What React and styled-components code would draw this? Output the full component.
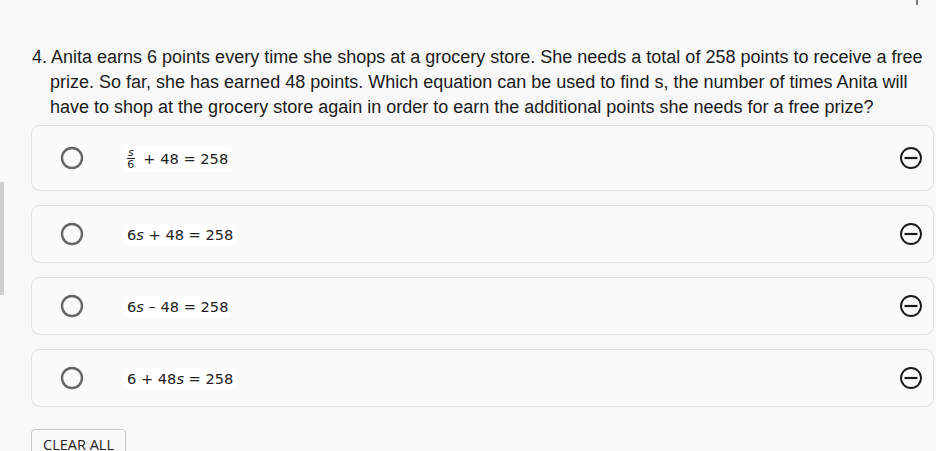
import React from "react";
import styled, { createGlobalStyle } from "styled-components";

const GlobalStyle = createGlobalStyle`
  html, body {
    margin: 0;
    padding: 0;
    background: #f8f8f8;
    overflow: hidden;
  }
`;

const choices = [
  { id: "a", tall: true, eq: "frac" },
  { id: "b", eq: ["6", "s", " + 48 = 258"] },
  { id: "c", eq: ["6", "s", " \u2013 48 = 258"] },
  { id: "d", eq: ["6 + 48", "s", " = 258"] },
];

function RadioIcon() {
  return (
    <svg width="24" height="24" viewBox="0 0 24 24">
      <circle cx="12" cy="12" r="10" fill="none" stroke="#666" strokeWidth="2.4" />
    </svg>
  );
}

function MinusIcon() {
  return (
    <svg width="24" height="24" viewBox="0 0 24 24">
      <circle cx="12" cy="12" r="10" fill="none" stroke="#1a1a1a" strokeWidth="1.9" />
      <line x1="5.5" y1="12" x2="18.5" y2="12" stroke="#1a1a1a" strokeWidth="2.2" />
    </svg>
  );
}

function Equation({ eq }) {
  if (eq === "frac") {
    return (
      <Eq>
        <Frac>
          <Num>s</Num>
          <Den>6</Den>
        </Frac>
        {" + 48 = 258"}
      </Eq>
    );
  }
  return (
    <Eq>
      {eq[0]}
      <Var>{eq[1]}</Var>
      {eq[2]}
    </Eq>
  );
}

export default function App() {
  return (
    <Page>
      <GlobalStyle />
      <Rail>
        <RailBar />
      </Rail>
      <Main>
        <Header>
          <Tick />
        </Header>
        <Question>
          <Line>4. Anita earns 6 points every time she shops at a grocery store. She needs a total of 258 points to receive a free</Line>
          <Line $indent>prize. So far, she has earned 48 points. Which equation can be used to find s, the number of times Anita will</Line>
          <Line $indent>have to shop at the grocery store again in order to earn the additional points she needs for a free prize?</Line>
        </Question>
        <List>
          {choices.map((c) => (
            <Card key={c.id} $tall={c.tall}>
              <RadioIcon />
              <Equation eq={c.eq} />
              <Strike>
                <MinusIcon />
              </Strike>
            </Card>
          ))}
        </List>
        <ClearButton>CLEAR ALL</ClearButton>
      </Main>
    </Page>
  );
}

const Page = styled.div`
  display: flex;
  width: 936px;
  height: 451px;
  background: #f8f8f8;
  overflow: hidden;
`;

const Rail = styled.div`
  width: 4px;
  flex: none;
`;

const RailBar = styled.div`
  margin-top: 182px;
  height: 113px;
  background: #cfcfcf;
`;

const Main = styled.div`
  flex: 1;
  padding: 0 2px 0 27px;
`;

const Header = styled.div`
  height: 45px;
  display: flex;
  justify-content: flex-end;
  padding-right: 16px;
`;

const Tick = styled.div`
  width: 2px;
  height: 5px;
  background: #777;
`;

const Question = styled.div`
  font-family: "Liberation Sans", Arial, sans-serif;
  font-size: 18px;
  line-height: 25px;
  color: #1b1b1b;
`;

const Line = styled.div`
  white-space: nowrap;
  padding-left: ${(p) => (p.$indent ? "19px" : "1px")};
`;

const List = styled.div`
  display: flex;
  flex-direction: column;
  gap: 14px;
  margin-top: 5px;
`;

const Card = styled.div`
  display: flex;
  align-items: center;
  height: ${(p) => (p.$tall ? "64px" : "56px")};
  border: 1px solid #e0e0e0;
  border-radius: 9px;
  background: #fafafa;
  padding: 0 10px 0 28px;
`;

const Eq = styled.span`
  display: inline-flex;
  align-items: center;
  margin-left: 40px;
  padding: 2px 3px;
  background: #ffffff;
  font-family: "DejaVu Sans", sans-serif;
  font-size: 14.6px;
  color: #222;
  white-space: pre;
`;

const Var = styled.span`
  font-style: italic;
`;

const Frac = styled.span`
  display: inline-flex;
  flex-direction: column;
  align-items: center;
  font-size: 11px;
  line-height: 11px;
  margin-right: 4px;
`;

const Num = styled.span`
  font-style: italic;
  border-bottom: 1px solid #222;
  padding: 0 1px;
`;

const Den = styled.span``;

const Strike = styled.div`
  margin-left: auto;
  display: flex;
`;

const ClearButton = styled.button`
  margin-top: 22px;
  height: 32px;
  padding: 5px 11px 0;
  border: 1px solid #c8c8c8;
  border-radius: 4px;
  background: #f8f8f8;
  font-family: "Open Sans", sans-serif;
  font-size: 14.5px;
  color: #222;
  display: flex;
  align-items: flex-start;
`;
